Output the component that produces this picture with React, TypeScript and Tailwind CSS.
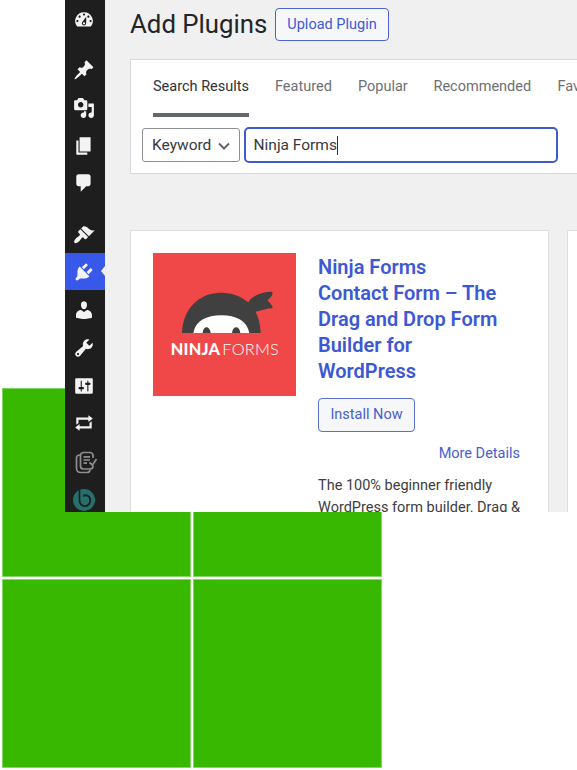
import type { ReactNode } from "react";

const icons = {
  dashboard:
    "M3.76 16h12.48A7.998 7.998 0 0 0 10 3a7.998 7.998 0 0 0-6.24 13zM10 4c.55 0 1 .45 1 1s-.45 1-1 1-1-.45-1-1 .45-1 1-1zM6 6c.55 0 1 .45 1 1s-.45 1-1 1-1-.45-1-1 .45-1 1-1zm8 0c.55 0 1 .45 1 1s-.45 1-1 1-1-.45-1-1 .45-1 1-1zm-5.37 5.55L12 7v6c0 1.1-.9 2-2 2s-2-.9-2-2c0-.57.24-1.08.63-1.45zM4 10c.55 0 1 .45 1 1s-.45 1-1 1-1-.45-1-1 .45-1 1-1zm12 0c.55 0 1 .45 1 1s-.45 1-1 1-1-.45-1-1 .45-1 1-1zm-5 3c0-.55-.45-1-1-1s-1 .45-1 1 .45 1 1 1 1-.45 1-1z",
  posts:
    "M10.44 3.02l1.82-1.82 6.36 6.35-1.83 1.82c-1.05-.68-2.48-.57-3.41.36l-.75.75c-.92.93-1.04 2.35-.35 3.41l-1.83 1.82-2.41-2.41-2.8 2.79c-.42.42-3.38 2.71-3.8 2.29s1.86-3.39 2.28-3.81l2.79-2.79L4.1 9.36l1.83-1.82c1.05.69 2.48.57 3.4-.36l.75-.75c.93-.92 1.05-2.35.36-3.41z",
  media:
    "M13 11V4c0-.55-.45-1-1-1h-1.67L9 1H5L3.67 3H2c-.55 0-1 .45-1 1v7c0 .55.45 1 1 1h10c.55 0 1-.45 1-1zM7 4.5c1.38 0 2.5 1.12 2.5 2.5S8.38 9.5 7 9.5 4.5 8.38 4.5 7 5.62 4.5 7 4.5zM14 6h5v10.5c0 1.38-1.12 2.5-2.5 2.5S14 17.88 14 16.5s1.12-2.5 2.5-2.5c.17 0 .34.02.5.05V9h-3V6zm-4 8.05V13h2v3.5c0 1.38-1.12 2.5-2.5 2.5S7 17.88 7 16.5 8.12 14 9.5 14c.17 0 .34.02.5.05z",
  pages: "M6 15V2h10v13H6zm-1 1h8v2H3V5h2v11z",
  comments:
    "M5 2h9c1.1 0 2 .9 2 2v7c0 1.1-.9 2-2 2h-2l-5 5v-5H5c-1.1 0-2-.9-2-2V4c0-1.1.9-2 2-2z",
  appearance:
    "M14.48 11.06 7.41 3.99l1.5-1.5c.5-.56 2.3-.47 3.51.32 1.21.8 1.43 1.28 2.91 2.1 1.18.64 2.45 1.26 4.45.85l-5.3 5.3zm-.71.71L6.7 4.7 4.93 6.47c-.39.39-.39 1.02 0 1.41l1.06 1.06c.39.39.39 1.03 0 1.42-.6.6-1.43 1.11-2.21 1.69-.35.26-.7.53-1.01.84C1.43 14.23.4 16.08 1.4 17.07c.99 1 2.84-.03 4.18-1.36.31-.31.58-.66.85-1.02.57-.78 1.08-1.61 1.69-2.21.39-.39 1.02-.39 1.41 0l1.06 1.06c.39.39 1.02.39 1.41 0z",
  plugins:
    "M13.11 4.36L9.87 7.6 8 5.73l3.24-3.24c.35-.34 1.05-.2 1.56.32.52.51.66 1.21.31 1.55zm-8 1.77l.91-1.12 9.01 9.01-1.19.84c-.71.71-2.63 1.16-3.82 1.16H6.14L4.9 17.26c-.59.59-1.54.59-2.12 0-.59-.58-.59-1.53 0-2.12l1.24-1.24v-3.88c0-1.13.4-3.19 1.09-3.89zm7.26 3.97l3.24-3.24c.34-.35 1.04-.21 1.55.31.52.51.66 1.21.31 1.55l-3.24 3.25z",
  users:
    "M10 9.25c-2.27 0-2.73-3.44-2.73-3.44C7 4.02 7.82 2 9.97 2c2.16 0 2.98 2.02 2.71 3.81 0 0-.41 3.44-2.68 3.44zm0 2.57L12.72 10c2.39 0 4.52 2.33 4.52 4.53v2.49s-3.65 1.13-7.24 1.13c-3.65 0-7.24-1.13-7.24-1.13v-2.49c0-2.25 1.94-4.48 4.47-4.48z",
  tools:
    "M16.68 9.77c-1.34 1.34-3.3 1.67-4.95.99l-5.41 6.52c-.99.99-2.59.99-3.58 0s-.99-2.59 0-3.57l6.52-5.42c-.68-1.65-.35-3.61.99-4.95 1.28-1.28 3.12-1.62 4.72-1.06l-2.89 2.89 2.82 2.82 2.86-2.87c.53 1.58.18 3.39-1.08 4.65zM3.81 16.21c.4.39 1.04.39 1.43 0 .4-.4.4-1.04 0-1.43-.39-.4-1.03-.4-1.43 0-.39.39-.39 1.03 0 1.43z",
  settings:
    "M18 16V4c0-.55-.45-1-1-1H3c-.55 0-1 .45-1 1v12c0 .55.45 1 1 1h14c.55 0 1-.45 1-1zM8 11h1c.55 0 1 .45 1 1s-.45 1-1 1H8v1.5c0 .28-.22.5-.5.5s-.5-.22-.5-.5V13H6c-.55 0-1-.45-1-1s.45-1 1-1h1V5.5c0-.28.22-.5.5-.5s.5.22.5.5V11zm5-2h-1c-.55 0-1-.45-1-1s.45-1 1-1h1V5.5c0-.28.22-.5.5-.5s.5.22.5.5V7h1c.55 0 1 .45 1 1s-.45 1-1 1h-1v5.5c0 .28-.22.5-.5.5s-.5-.22-.5-.5V9z",
  repeat:
    "M5 7v3l-2 1.5V5h11V3l4 3.01L14 9V7H5zm10 6v-3l2-1.5V15H6v2l-4-3.01L6 11v2h9z",
};

function Item({ icon, active = false }: { icon: keyof typeof icons; active?: boolean }) {
  return (
    <Slot active={active}>
      <svg viewBox="0 0 20 20" className="size-[22px]" fill="#f3f3f3">
        <path d={icons[icon]} />
      </svg>
    </Slot>
  );
}

function Slot({ children, active = false }: { children: ReactNode; active?: boolean }) {
  return (
    <li
      className={
        active
          ? "relative flex h-[37.7px] shrink-0 items-center justify-center bg-[#3858e9] pt-px pr-[2px]"
          : "flex h-[37.7px] shrink-0 items-center justify-center pt-[2px] pr-[2px]"
      }
    >
      {children}
      {active && (
        <svg viewBox="0 0 4 10" className="absolute top-[13.5px] right-0 h-[10px] w-[4px]" fill="#f0f0f0">
          <path d="M4 0v10L0 5z" />
        </svg>
      )}
    </li>
  );
}

function Sidebar() {
  return (
    <ul className="flex h-[512px] w-[40px] shrink-0 flex-col overflow-hidden bg-[#1e1e1e]">
      <Item icon="dashboard" />
      <li className="h-[12.7px] shrink-0" />
      <Item icon="posts" />
      <Item icon="media" />
      <Item icon="pages" />
      <Item icon="comments" />
      <li className="h-[13.8px] shrink-0" />
      <Item icon="appearance" />
      <Item icon="plugins" active />
      <Item icon="users" />
      <Item icon="tools" />
      <Item icon="settings" />
      <Item icon="repeat" />
      <li className="h-px shrink-0" />
      <Slot>
        <svg viewBox="0 0 24 24" className="ml-1 size-[24px]" fill="none" stroke="#8e8e8e" strokeWidth="1.7" strokeLinejoin="round">
          <path d="M19 8V5.500a3 3 0 0 0-3-3H9.500a3 3 0 0 0-3 3v10.500a3 3 0 0 0 3 3H16a3 3 0 0 0 3-3v-.5" />
          <path d="M6 5h-.5a3 3 0 0 0-3 3v10.500a4 4 0 0 0 4 4H13a3 3 0 0 0 3-2.700" />
          <path d="M9.500 6.800h6.500M9.500 10h6.500M9.500 13.200h3.500" />
          <path d="m15.500 12.500 3 2.500 4-6" />
        </svg>
      </Slot>
      <Slot>
        <svg viewBox="0 0 24 24" className="size-[24px]" fill="none">
          <circle cx="12" cy="12" r="11" fill="#25706c" />
          <path d="M7.500 0v13" stroke="#1e1e1e" strokeWidth="1.600" />
          <path d="M10 8.500c4-2.800 8.300-.5 8.300 4a5.400 5.400 0 0 1-10.800.3" stroke="#1e1e1e" strokeWidth="1.800" />
          <path d="M10.500 3.500v9" stroke="#25706c" strokeWidth="1.500" />
        </svg>
      </Slot>
    </ul>
  );
}

function NinjaLogo() {
  return (
    <svg viewBox="24 24 429 429" className="size-[143px] shrink-0 bg-[#f04848]">
      <path d="M111 264C113 190 163 143 229 143C262 143 289 155 310 172C322 151 352 140 381 140C387 150 376 157 368 166C374 175 385 181 382 190C366 188 350 197 332 200C341 218 346 239 347 264Z" fill="#404040" />
      <path d="M145 264C151 228 184 211 229 211C274 211 306 228 313 264Z" fill="#fff" />
      <path d="M173 264C174 241 195 241 197 264ZM261 264C263 241 284 241 286 264Z" fill="#404040" />
      <text x="77" y="331" textLength="148" lengthAdjust="spacing" className="font-['Lato'] text-[49px] font-black" fill="#fff">NINJA</text>
      <text x="232" y="331" textLength="169" lengthAdjust="spacing" className="font-['Lato'] text-[49px] font-light" fill="#fff">FORMS</text>
    </svg>
  );
}

function PluginCard() {
  return (
    <article className="flex h-[400px] w-[419px] shrink-0 gap-[22px] border border-[#dedede] bg-white pt-[22px] pl-[22px]">
      <NinjaLogo />
      <div className="flex w-[202px] flex-col items-start">
        <h3 className="mt-[0.500px] w-[185px] text-[20px] leading-[26px] font-semibold text-[#3c58d4]">
          Ninja Forms
          <br />
          Contact Form – The Drag and Drop Form Builder for WordPress
        </h3>
        <button className="mt-[14.500px] flex h-[34px] w-[97px] items-center justify-center rounded-[4px] border border-[#5871cb] bg-[#f6f7f8] text-[14.500px] text-[#4660d0]">
          Install Now
        </button>
        <a className="mt-[11px] self-end text-[14.500px] leading-[22px] text-[#4660d0]">More Details</a>
        <p className="mt-[10px] text-[14.500px] leading-[22px] whitespace-nowrap text-[#3c3d40]">
          The 100% beginner friendly
          <br />
          WordPress form builder. Drag &amp;
        </p>
      </div>
    </article>
  );
}

function Content() {
  return (
    <main className="flex h-[512px] min-w-0 flex-1 flex-col overflow-hidden bg-[#f0f0f0] pl-[25px]">
      <header className="flex h-[59px] shrink-0 items-start">
        <h1 className="mt-[6px] w-[145px] text-[25.800px] leading-[36px] whitespace-nowrap text-[#222427]">Add Plugins</h1>
        <button className="mt-[8px] flex h-[33px] w-[114px] items-center justify-center rounded-[4px] border border-[#4964d2] bg-[#f6f7f9] text-[14.500px] whitespace-nowrap text-[#3d59dc]">
          Upload Plugin
        </button>
      </header>
      <section className="h-[115px] w-[520px] shrink-0 border border-[#d8d9da] bg-white">
        <nav className="flex h-[57px] gap-[26px] pl-[22px] text-[14.500px] leading-[54px] whitespace-nowrap text-[#6d6f73]">
          <a className="w-[96px] border-b-4 border-[#64696f] text-[#303236]">Search Results</a>
          <a className="w-[57px]">Featured</a>
          <a className="w-[49.500px]">Popular</a>
          <a className="w-[98px]">Recommended</a>
          <a>Favorites</a>
        </nav>
        <div className="mt-[10px] flex items-center gap-[4px] pl-[11px]">
          <div className="flex h-[34px] w-[98px] items-center rounded-[3px] border border-[#8c8f94] pt-px pl-[9px] text-[15.500px] text-[#37393d]">
            <span className="w-[66px]">Keyword</span>
            <svg viewBox="0 0 12 8" className="h-[8px] w-[12px]" fill="none" stroke="#63656a" strokeWidth="2">
              <path d="m1 1.500 5 5 5-5" />
            </svg>
          </div>
          <div className="-ml-[0.500px] flex h-[36px] w-[314px] items-center rounded-[5px] border-2 border-[#405bd0] pt-px pl-[8px] text-[15.500px] text-[#37393d]">
            <span>Ninja Forms</span>
            <span className="h-[19px] w-px bg-[#333]" />
          </div>
        </div>
      </section>
      <div className="mt-[56px] flex shrink-0 gap-[18px]">
        <PluginCard />
        <article className="h-[400px] w-[419px] shrink-0 border border-[#dedede] bg-white" />
      </div>
    </main>
  );
}

export default function App() {
  return (
    <div className="grid h-[770px] w-[577px] overflow-hidden bg-white font-['Roboto',sans-serif]">
      <div className="col-start-1 row-start-1 grid grid-cols-[189px_189px] grid-rows-[189px_189px] gap-[2px] pt-[388px] pl-[2px]">
        <div className="border border-[#85d663] bg-[#38b800]" />
        <div className="border border-[#85d663] bg-[#38b800]" />
        <div className="border border-[#85d663] bg-[#38b800]" />
        <div className="border border-[#85d663] bg-[#38b800]" />
      </div>
      <div className="z-10 col-start-1 row-start-1 ml-[65px] flex h-[512px] w-[512px] overflow-hidden">
        <Sidebar />
        <Content />
      </div>
    </div>
  );
}
